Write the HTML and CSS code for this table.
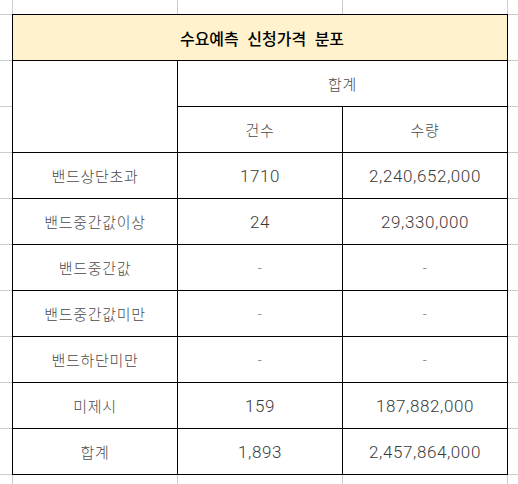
FILE: index.html
```html
<!DOCTYPE html>
<html lang="ko">
<head>
<meta charset="utf-8">
<title>수요예측 신청가격 분포</title>
<link rel="stylesheet" href="styles.css">
</head>
<body>
<div class="sheet">
  <div class="table">
    <div class="cell title">수요예측 신청가격 분포</div>
    <div class="cell corner"></div>
    <div class="cell head span2 ko">합계</div>
    <div class="cell head ko">건수</div>
    <div class="cell head ko">수량</div>

    <div class="cell ko">밴드상단초과</div>
    <div class="cell num">1710</div>
    <div class="cell num">2,240,652,000</div>

    <div class="cell ko">밴드중간값이상</div>
    <div class="cell num">24</div>
    <div class="cell num">29,330,000</div>

    <div class="cell ko">밴드중간값</div>
    <div class="cell num dash">-</div>
    <div class="cell num dash">-</div>

    <div class="cell ko">밴드중간값미만</div>
    <div class="cell num dash">-</div>
    <div class="cell num dash">-</div>

    <div class="cell ko">밴드하단미만</div>
    <div class="cell num dash">-</div>
    <div class="cell num dash">-</div>

    <div class="cell ko">미제시</div>
    <div class="cell num">159</div>
    <div class="cell num">187,882,000</div>

    <div class="cell ko">합계</div>
    <div class="cell num">1,893</div>
    <div class="cell num">2,457,864,000</div>
  </div>
</div>
</body>
</html>
```

FILE: styles.css
```css
html, body {
  margin: 0;
  padding: 0;
  background: #ffffff;
}

.sheet {
  width: 518px;
  height: 484px;
  overflow: hidden;
  box-sizing: border-box;
  padding: 14px 0 0 12px;
  background-color: #ffffff;
  background-image:
    linear-gradient(to right, #cccccc 1px, transparent 1px),
    linear-gradient(to bottom, #cccccc 1px, transparent 1px);
  background-size: 165px 100%, 100% 46px;
  background-position: 12px 0, 0 14px;
}

.table {
  display: grid;
  grid-template-columns: repeat(3, 164px);
  grid-template-rows: repeat(10, 45px);
  gap: 1px;
  padding: 1px;
  width: max-content;
  background: #000000;
}

.cell {
  background: #ffffff;
  display: flex;
  align-items: center;
  justify-content: center;
  color: #3a3a3a;
}

.title {
  grid-column: 1 / 4;
  background: #fff2cc;
  color: #000000;
  font-family: "Noto Sans CJK KR", sans-serif;
  font-size: 16px;
  font-weight: 500;
  letter-spacing: 0;
  word-spacing: 4px;
  padding-left: 4px;
}

.corner {
  grid-row: span 2;
}

.span2 {
  grid-column: span 2;
}

.ko {
  font-family: "Noto Sans CJK KR", sans-serif;
  font-size: 15px;
  font-weight: 300;
  letter-spacing: 0.7px;
  color: #4a4a4a;
}

.num {
  font-family: Roboto, "Liberation Sans", sans-serif;
  font-size: 17px;
  font-weight: 300;
  letter-spacing: 0.6px;
  color: #3a3a3a;
}

.dash {
  color: #777777;
  font-size: 14px;
}
```
